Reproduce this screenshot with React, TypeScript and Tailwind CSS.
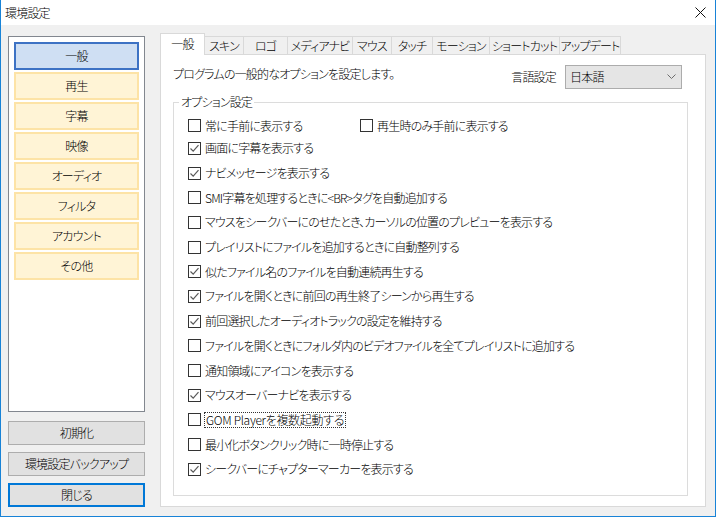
import React from "react";

const font = "font-['Noto_Sans_CJK_JP','Noto_Sans',sans-serif] [font-feature-settings:'palt'] tracking-[-0.8px] font-light";

const sideItems = ["一般", "再生", "字幕", "映像", "オーディオ", "フィルタ", "アカウント", "その他"];
const tabs: { label: string; w: string }[] = [
  { label: "一般", w: "w-[45px]" },
  { label: "スキン", w: "w-[40px]" },
  { label: "ロゴ", w: "w-[45px]" },
  { label: "メディアナビ", w: "w-[66px]" },
  { label: "マウス", w: "w-[40px]" },
  { label: "タッチ", w: "w-[42px]" },
  { label: "モーション", w: "w-[58px]" },
  { label: "ショートカット", w: "w-[71px]" },
  { label: "アップデート", w: "w-[62px]" },
];

const options: { label: string; checked: boolean; focus?: boolean }[] = [
  { label: "画面に字幕を表示する", checked: true },
  { label: "ナビメッセージを表示する", checked: true },
  { label: "SMI字幕を処理するときに<BR>タグを自動追加する", checked: false },
  { label: "マウスをシークバーにのせたとき、カーソルの位置のプレビューを表示する", checked: false },
  { label: "プレイリストにファイルを追加するときに自動整列する", checked: false },
  { label: "似たファイル名のファイルを自動連続再生する", checked: true },
  { label: "ファイルを開くときに前回の再生終了シーンから再生する", checked: true },
  { label: "前回選択したオーディオトラックの設定を維持する", checked: true },
  { label: "ファイルを開くときにフォルダ内のビデオファイルを全てプレイリストに追加する", checked: false },
  { label: "通知領域にアイコンを表示する", checked: false },
  { label: "マウスオーバーナビを表示する", checked: true },
  { label: "GOM Playerを複数起動する", checked: false, focus: true },
  { label: "最小化ボタンクリック時に一時停止する", checked: false },
  { label: "シークバーにチャプターマーカーを表示する", checked: true },
];

function Box({ checked }: { checked: boolean }) {
  return (
    <span className="flex h-[13px] w-[13px] shrink-0 items-center justify-center border border-[#333333] bg-white">
      {checked && (
        <svg width="11" height="11" viewBox="0 0 11 11">
          <path d="M1.5 5.5 L4.2 8.2 L9.5 2.2" fill="none" stroke="#5a5a5a" strokeWidth="1.2" />
        </svg>
      )}
    </span>
  );
}

function Check({ label, checked, focus }: { label: string; checked: boolean; focus?: boolean }) {
  return (
    <label className="flex items-center gap-[3px]">
      <Box checked={checked} />
      <span
        className={
          focus
            ? "border border-dotted border-[#333] px-px leading-[14px] tracking-[-0.3px]"
            : "px-px leading-[16px]"
        }
      >
        {label}
      </span>
    </label>
  );
}

export default function App() {
  return (
    <div className={`${font} flex h-[517px] w-[716px] flex-col border-x border-b border-[#1883d7] bg-[#f0f0f0] text-[12px] text-black`}>
      <div className="flex h-[25px] shrink-0 items-center justify-between bg-white pl-[4px] pr-[9px]">
        <span className="text-[12px]">環境設定</span>
        <svg width="11" height="11" viewBox="0 0 11 11">
          <path d="M0.5 0.5 L10.5 10.5 M10.5 0.5 L0.5 10.5" stroke="#111" strokeWidth="1" />
        </svg>
      </div>

      <div className="flex min-h-0 flex-1 pb-[9px] pl-[7px] pt-[8px]">
        <div className="flex w-[137px] shrink-0 flex-col pt-[3px]">
          <div className="flex h-[379px] flex-col gap-[2px] border border-[#82878f] bg-white px-[5px] pt-[5px]">
            {sideItems.map((s, i) => (
              <div
                key={s}
                className={
                  i === 0
                    ? "flex h-[28px] items-center justify-center border-2 border-[#3d72c4] bg-[#cfdff3]"
                    : "flex h-[28px] items-center justify-center border-2 border-[#fde3a6] bg-[#fff4d6]"
                }
              >
                {s}
              </div>
            ))}
          </div>
          <div className="mt-[9px] flex flex-col gap-[7px]">
            <div className="flex h-[24px] items-center justify-center border border-[#adadad] bg-[#e1e1e1]">初期化</div>
            <div className="flex h-[24px] items-center justify-center border border-[#adadad] bg-[#e1e1e1]">環境設定バックアップ</div>
            <div className="flex h-[24px] items-center justify-center border-2 border-[#0078d7] bg-[#e1e1e1]">閉じる</div>
          </div>
        </div>

        <div className="ml-[15px] flex w-[546px] flex-col">
          <div className="relative z-10 flex h-[21px] items-end pl-px">
            {tabs.map((t, i) => (
              <div
                key={t.label}
                className={
                  i === 0
                    ? `${t.w} -mb-px -ml-px flex h-[22px] shrink-0 items-start justify-center border border-b-0 border-[#d9d9d9] bg-white pt-[1px]`
                    : `${t.w} -ml-px flex h-[18px] shrink-0 items-center justify-center border border-b-0 border-[#d9d9d9] bg-[#f0f0f0]`
                }
              >
                {t.label}
              </div>
            ))}
          </div>
          <div className="flex flex-1 flex-col border border-[#d9d9d9] bg-white px-[12px]">
            <div className="flex items-center justify-between pt-[10px]">
              <span className="pb-[6px]">プログラムの一般的なオプションを設定します。</span>
              <div className="flex items-center gap-[9px] pr-[11px]">
                <span>言語設定</span>
                <div className="flex h-[24px] w-[117px] items-center justify-between border border-[#acacac] bg-[#e5e5e5] pl-[4px] pr-[5px]">
                  <span>日本語</span>
                  <svg width="9" height="6" viewBox="0 0 9 6">
                    <path d="M0.5 0.5 L4.5 4.5 L8.5 0.5" fill="none" stroke="#6d6d6d" strokeWidth="1" />
                  </svg>
                </div>
              </div>
            </div>

            <div className="relative mr-[5px] mt-[13px] h-[394px] border border-[#dcdcdc] pl-[14px] pt-[12px]">
              <span className="absolute -top-[9px] left-[5px] bg-white px-[2px] leading-[16px]">オプション設定</span>
              <div className="flex h-[21px] items-center">
                <div className="w-[172px]">
                  <Check label="常に手前に表示する" checked={false} />
                </div>
                <Check label="再生時のみ手前に表示する" checked={false} />
              </div>
              {options.map((o) => (
                <div key={o.label} className="flex h-[24.7px] items-center">
                  <Check label={o.label} checked={o.checked} focus={o.focus} />
                </div>
              ))}
            </div>
          </div>
        </div>
      </div>
    </div>
  );
}
